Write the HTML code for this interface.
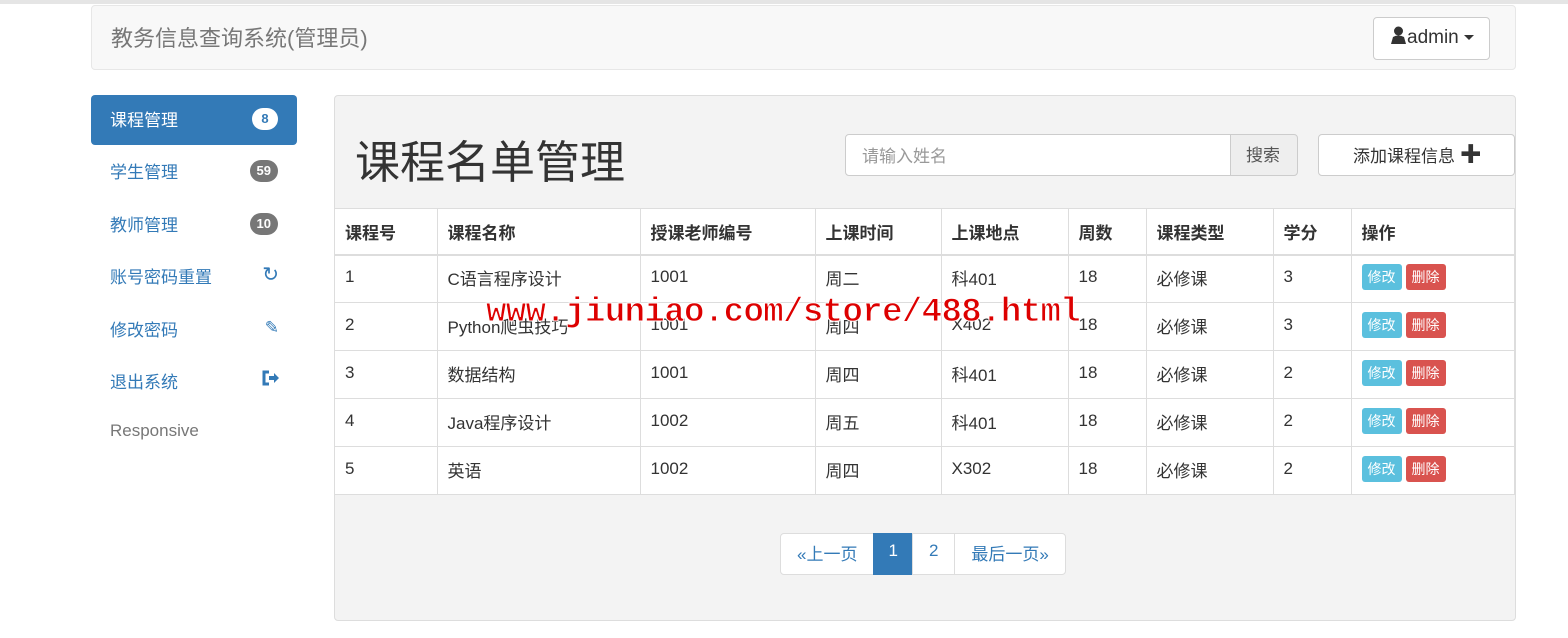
<!DOCTYPE html><html><head><meta charset="utf-8"><style>
*{box-sizing:border-box;margin:0;padding:0}
body{width:1568px;height:638px;background:#fff;font-family:"Liberation Sans","Noto Sans CJK SC",sans-serif;font-size:17px;color:#333;position:relative;overflow:hidden}
.topline{position:absolute;left:0;top:0;width:1568px;height:4px;background:#e5e5e5}
.nav{position:absolute;left:91px;top:5px;width:1425px;height:65px;background:#f8f8f8;border:1px solid #e7e7e7;border-radius:4px}
.brand{position:absolute;left:19px;top:15px;font-size:22px;color:#777}
.admin{position:absolute;left:1281px;top:11px;width:117px;height:43px;background:#fff;border:1px solid #ccc;border-radius:4px;font-size:19px;color:#333;padding:8px 0 0 16px}
.side a{position:absolute;left:91px;width:206px;height:50px;color:#337ab7;font-size:17px;padding:11px 0 0 19px;text-decoration:none}
.side a.act{background:#337ab7;color:#fff;border-radius:4px}
.badge{position:absolute;right:19px;top:13px;height:22px;min-width:26px;border-radius:11px;background:#777;color:#fff;font-size:13px;font-weight:bold;text-align:center;line-height:22px;padding:0 7px}
.act .badge{background:#fff;color:#337ab7}
.ic{position:absolute;right:18px;top:13px}
.panel{position:absolute;left:334px;top:95px;width:1182px;height:526px;background:#f3f3f3;border:1px solid #ddd;border-radius:4px}
h1{position:absolute;left:20px;top:30px;font-size:45px;font-weight:normal;color:#333}
.inp{position:absolute;left:510px;top:38px;width:386px;height:42px;background:#fff;border:1px solid #ccc;border-radius:4px 0 0 4px;color:#999;font-size:17px;padding:7px 16px}
.sbtn{position:absolute;left:895px;top:38px;width:68px;height:42px;background:#eee;border:1px solid #ccc;border-radius:0 4px 4px 0;color:#555;font-size:17px;padding:6px 0 0 15px}
.add{position:absolute;left:983px;top:38px;width:197px;height:42px;background:#fff;border:1px solid #ccc;border-radius:4px;font-size:17px;padding:7px 0 0 34px}
table{position:absolute;left:0;top:112px;width:1180px;border-collapse:collapse;background:#fff}
td,th{border:1px solid #ddd;text-align:left;padding:0 10px;height:48px;font-size:17px;font-weight:normal}
td{padding-bottom:3px}
th{font-weight:bold;height:46px;border-bottom:2px solid #ddd}
tr td:first-child,tr th:first-child{border-left:none}
.b{display:inline-block;color:#fff;font-size:14px;padding:3px 6px;border-radius:3px;margin-right:4px}
.m{background:#5bc0de}.d{background:#d9534f}
.pg{position:absolute;left:446px;top:437px;height:42px;display:flex}
.pg span{border:1px solid #ddd;background:#fff;color:#337ab7;padding:6px 16px;font-size:17px;margin-left:-1px;height:42px}
.pg span.on{background:#337ab7;color:#fff;border-color:#337ab7;padding:7px 14px}
.wm{position:absolute;left:486px;top:294px;font-family:"Liberation Mono",monospace;font-weight:bold;font-size:34px;color:#d00;letter-spacing:-0.6px;-webkit-text-stroke:1px #fff}
</style></head><body>
<div class="topline"></div>
<div class="nav"><div class="brand">教务信息查询系统(管理员)</div>
<div class="admin"><svg width="17" height="18" viewBox="0 0 17 18" style="vertical-align:-1px"><circle cx="8.5" cy="5" r="4.5" fill="#333"/><path d="M1 18 L3 11 Q8.5 8 14 11 L16 18Z" fill="#333"/></svg>admin <span style="display:inline-block;border-left:5px solid transparent;border-right:5px solid transparent;border-top:5px solid #333;vertical-align:3px"></span></div></div>
<div class="side">
<a class="act" style="top:95px">课程管理<span class="badge">8</span></a>
<a style="top:147px">学生管理<span class="badge">59</span></a>
<a style="top:200px">教师管理<span class="badge">10</span></a>
<a style="top:252px">账号密码重置<span class="ic" style="font-size:20px;top:10px">&#x21bb;</span></a>
<a style="top:305px">修改密码<span class="ic">&#x270E;</span></a>
<a style="top:357px">退出系统<span class="ic"><svg width="18" height="16" viewBox="0 0 18 16"><path d="M8 2H3v12h5" stroke="#337ab7" stroke-width="3" fill="none"/><path d="M8 6h5V3l5 5-5 5v-3H8z" fill="#337ab7"/></svg></span></a>
<a style="top:410px;color:#777">Responsive</a>
</div>
<div class="panel">
<h1>课程名单管理</h1>
<div class="inp">请输入姓名</div><div class="sbtn">搜索</div>
<div class="add">添加课程信息 <b style="font-size:22px;line-height:17px">&#x271A;</b></div>
<table>
<tr><th style="width:102px">课程号</th><th style="width:203px">课程名称</th><th style="width:175px">授课老师编号</th><th style="width:126px">上课时间</th><th style="width:127px">上课地点</th><th style="width:78px">周数</th><th style="width:127px">课程类型</th><th style="width:78px">学分</th><th>操作</th></tr>
<tr><td>1</td><td>C语言程序设计</td><td>1001</td><td>周二</td><td>科401</td><td>18</td><td>必修课</td><td>3</td><td><span class="b m">修改</span><span class="b d">删除</span></td></tr>
<tr><td>2</td><td>Python爬虫技巧</td><td>1001</td><td>周四</td><td>X402</td><td>18</td><td>必修课</td><td>3</td><td><span class="b m">修改</span><span class="b d">删除</span></td></tr>
<tr><td>3</td><td>数据结构</td><td>1001</td><td>周四</td><td>科401</td><td>18</td><td>必修课</td><td>2</td><td><span class="b m">修改</span><span class="b d">删除</span></td></tr>
<tr><td>4</td><td>Java程序设计</td><td>1002</td><td>周五</td><td>科401</td><td>18</td><td>必修课</td><td>2</td><td><span class="b m">修改</span><span class="b d">删除</span></td></tr>
<tr><td>5</td><td>英语</td><td>1002</td><td>周四</td><td>X302</td><td>18</td><td>必修课</td><td>2</td><td><span class="b m">修改</span><span class="b d">删除</span></td></tr>
</table>
<div class="pg"><span style="border-radius:4px 0 0 4px">«上一页</span><span class="on">1</span><span style="padding-top:7px">2</span><span style="border-radius:0 4px 4px 0">最后一页»</span></div>
</div>
<div class="wm">www.jiuniao.com/store/488.html</div>
</body></html>
